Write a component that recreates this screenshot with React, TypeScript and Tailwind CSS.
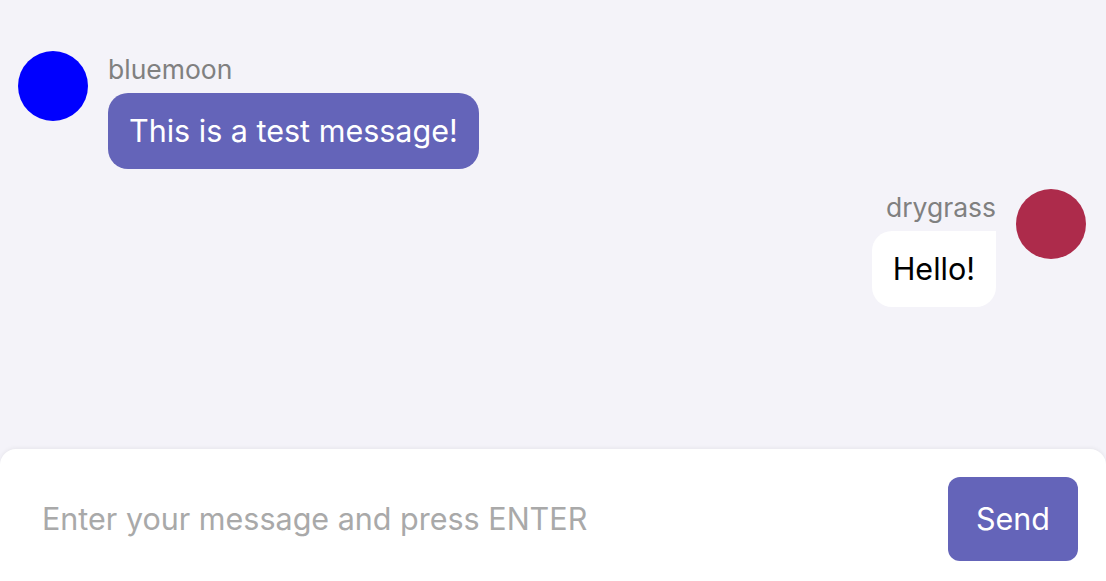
import React, { useState } from 'react';

type Msg = { id: number; user: string; text: string; color: string; mine: boolean };

const messages: Msg[] = [
  { id: 1, user: 'bluemoon', text: 'This is a test message!', color: 'bg-[#0000ff]', mine: false },
  { id: 2, user: 'drygrass', text: 'Hello!', color: 'bg-[#ad2b4b]', mine: true },
];

export default function App() {
  const [draft, setDraft] = useState('');

  return (
    <div className="h-[581px] w-full overflow-hidden bg-[#f4f3f9] flex flex-col font-['Inter',sans-serif]">
      {/* Messages */}
      <div className="h-[449px] shrink-0 pt-[51px] px-[18px] flex flex-col gap-[20px]">
        {messages.map((m) =>
          m.mine ? (
            <div key={m.id} className="flex justify-end gap-[20px] pr-[2px]">
              <div className="flex flex-col items-end">
                <div className="text-[26.5px] leading-[36px] text-[#808080]">{m.user}</div>
                <div className="mt-[6px] bg-white text-black text-[30.5px] leading-[36px] px-[21px] py-[20px] rounded-[20px] rounded-tr-none">
                  {m.text}
                </div>
              </div>
              <div className={`w-[70px] h-[70px] rounded-full ${m.color}`} />
            </div>
          ) : (
            <div key={m.id} className="flex gap-[20px]">
              <div className={`w-[70px] h-[70px] rounded-full shrink-0 ${m.color}`} />
              <div className="flex flex-col items-start">
                <div className="text-[26.5px] leading-[36px] text-[#808080]">{m.user}</div>
                <div className="mt-[6px] bg-[#6464b9] text-white text-[30.5px] leading-[36px] px-[21px] py-[20px] rounded-[20px]">
                  {m.text}
                </div>
              </div>
            </div>
          )
        )}
      </div>

      {/* Composer */}
      <div className="h-[140px] shrink-0 bg-white rounded-t-[16px] shadow-[0_-1px_4px_rgba(0,0,0,0.06)] flex items-center pl-[42px] pr-[28px] gap-4">
        <input
          type="text"
          value={draft}
          onChange={(e) => setDraft(e.target.value)}
          placeholder="Enter your message and press ENTER"
          className="flex-1 text-[30.5px] text-black placeholder:text-[#a9a9a9] bg-transparent outline-none"
        />
        <button className="w-[130px] h-[84px] rounded-[12px] bg-[#6464b9] text-white text-[30.5px]">
          Send
        </button>
      </div>
    </div>
  );
}
